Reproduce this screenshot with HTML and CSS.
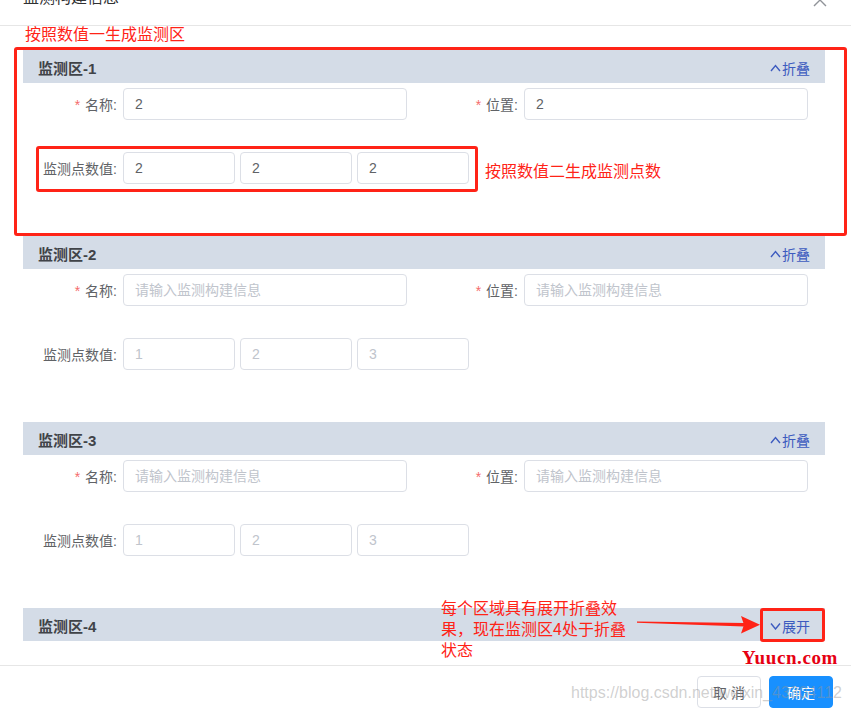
FILE: index.html
```html
<!DOCTYPE html>
<html lang="zh">
<head>
<meta charset="utf-8">
<title>监测构建信息</title>
<link rel="stylesheet" href="styles.css">
</head>
<body>
<div class="dialog">
  <div class="dlg-header">
    <span class="dlg-title">监测构建信息</span>
    <svg class="dlg-close" width="14" height="14" viewBox="0 0 14 14"><path d="M1 1L13 13M13 1L1 13" stroke="#909399" stroke-width="1.4" fill="none"/></svg>
  </div>

  <div class="dlg-body">
    <section class="zone">
      <div class="zone-head">
        <span class="zone-title">监测区-1</span>
        <span class="toggle"><svg class="chev" width="11" height="8" viewBox="0 0 11 8"><path d="M1 7L5.5 1.5L10 7" stroke="currentColor" stroke-width="1.4" fill="none"/></svg>折叠</span>
      </div>
      <div class="row">
        <div class="item"><label class="lbl req">名称:</label><input class="ipt" value="2"></div>
        <div class="item"><label class="lbl req">位置:</label><input class="ipt" value="2"></div>
      </div>
      <div class="row points">
        <div class="item"><label class="lbl">监测点数值:</label><input class="ipt sm" value="2"><input class="ipt sm" value="2"><input class="ipt sm" value="2"></div>
      </div>
    </section>

    <section class="zone">
      <div class="zone-head">
        <span class="zone-title">监测区-2</span>
        <span class="toggle"><svg class="chev" width="11" height="8" viewBox="0 0 11 8"><path d="M1 7L5.5 1.5L10 7" stroke="currentColor" stroke-width="1.4" fill="none"/></svg>折叠</span>
      </div>
      <div class="row">
        <div class="item"><label class="lbl req">名称:</label><input class="ipt" placeholder="请输入监测构建信息"></div>
        <div class="item"><label class="lbl req">位置:</label><input class="ipt" placeholder="请输入监测构建信息"></div>
      </div>
      <div class="row points">
        <div class="item"><label class="lbl">监测点数值:</label><input class="ipt sm" placeholder="1"><input class="ipt sm" placeholder="2"><input class="ipt sm" placeholder="3"></div>
      </div>
    </section>

    <section class="zone">
      <div class="zone-head">
        <span class="zone-title">监测区-3</span>
        <span class="toggle"><svg class="chev" width="11" height="8" viewBox="0 0 11 8"><path d="M1 7L5.5 1.5L10 7" stroke="currentColor" stroke-width="1.4" fill="none"/></svg>折叠</span>
      </div>
      <div class="row">
        <div class="item"><label class="lbl req">名称:</label><input class="ipt" placeholder="请输入监测构建信息"></div>
        <div class="item"><label class="lbl req">位置:</label><input class="ipt" placeholder="请输入监测构建信息"></div>
      </div>
      <div class="row points">
        <div class="item"><label class="lbl">监测点数值:</label><input class="ipt sm" placeholder="1"><input class="ipt sm" placeholder="2"><input class="ipt sm" placeholder="3"></div>
      </div>
    </section>

    <section class="zone collapsed">
      <div class="zone-head">
        <span class="zone-title">监测区-4</span>
        <span class="toggle"><svg class="chev" width="11" height="8" viewBox="0 0 11 8"><path d="M1 1.5L5.5 7L10 1.5" stroke="currentColor" stroke-width="1.4" fill="none"/></svg>展开</span>
      </div>
    </section>
  </div>

  <div class="dlg-footer">
    <button class="btn">取 消</button>
    <button class="btn primary">确定</button>
  </div>

  <div class="note note1">按照数值一生成监测区</div>
  <div class="mark mark1"></div>
  <div class="mark mark2"></div>
  <div class="note note2">按照数值二生成监测点数</div>
  <div class="note note3">每个区域具有展开折叠效<br>果，现在监测区4处于折叠<br>状态</div>
  <svg class="arrow" width="135" height="30" viewBox="0 0 135 30"><polygon points="7,11.5 114,13 114,16.5 7,12.7" fill="#ff2317"/><polygon points="111,6 130,14.8 111,23.5 114,14.8" fill="#ff2317"/></svg>
  <div class="mark mark3"></div>
  <div class="brand">Yuucn.com</div>
  <div class="watermark">https://blog.csdn.net/weixin_43304112</div>
</div>
</body>
</html>
```

FILE: styles.css
```css
* { box-sizing: border-box; }
html, body { margin: 0; padding: 0; background: #fff; }
body {
  font-family: "Liberation Sans", "Noto Sans CJK SC", sans-serif;
  font-size: 14px;
  color: #606266;
  overflow: hidden;
}
.dialog {
  position: relative;
  width: 851px;
  height: 713px;
  overflow: hidden;
}
.dlg-header {
  height: 26px;
  border-bottom: 1px solid #e6e6e6;
  display: flex;
  justify-content: space-between;
  padding: 0 23px;
}
.dlg-title {
  font-size: 16px;
  line-height: 16px;
  margin-top: -10px;
  color: #303133;
}
.dlg-close {
  margin-top: -7px;
  margin-right: 1px;
}
.dlg-body {
  padding: 24px 26px 24px 23px;
}
.zone { margin-bottom: 52px; }
.zone.collapsed { margin-bottom: 0; }
.zone-head {
  height: 33px;
  background: #d4dce7;
  display: flex;
  align-items: center;
  justify-content: space-between;
  padding: 0 15px;
}
.zone-title {
  font-size: 15px;
  font-weight: bold;
  color: #404348;
  padding-top: 1px;
}
.toggle {
  color: #3d5bbf;
  font-size: 14px;
  display: flex;
  align-items: center;
  padding-top: 2px;
}
.chev { margin-right: 1px; }
.row {
  display: grid;
  grid-template-columns: 1fr 1fr;
  margin-top: 5px;
}
.row.points { margin-top: 32px; display: flex; }
.item { display: flex; align-items: center; }
.lbl {
  width: 100px;
  padding-right: 6px;
  text-align: right;
  color: #606266;
  font-size: 14px;
}
.lbl.req::before {
  content: "*";
  color: #f56c6c;
  margin-right: 5px;
}
.ipt {
  width: 284px;
  height: 32px;
  border: 1px solid #dcdfe6;
  border-radius: 4px;
  padding: 0 11px;
  font-family: "Liberation Sans", "Noto Sans CJK SC", sans-serif;
  font-size: 14px;
  color: #606266;
  background: #fff;
  outline: none;
}
.ipt::placeholder { color: #c0c4cc; }
.ipt.sm { width: 112px; margin-right: 5px; }
.dlg-footer {
  border-top: 1px solid #e6e6e6;
  padding: 10px 18px 0 0;
  display: flex;
  justify-content: flex-end;
}
.btn {
  height: 32px;
  width: 64px;
  border: 1px solid #dcdfe6;
  border-radius: 4px;
  background: #fff;
  color: #606266;
  font-family: "Liberation Sans", "Noto Sans CJK SC", sans-serif;
  font-size: 14px;
  padding: 0;
}
.btn.primary {
  margin-left: 8px;
  background: #1890ff;
  border-color: #1890ff;
  color: #fff;
}
.note {
  position: absolute;
  color: #ff2317;
  font-size: 16px;
  font-family: "Noto Sans CJK SC", sans-serif;
  white-space: nowrap;
}
.note1 { left: 25px; top: 24px; line-height: 18px; }
.note2 { left: 485px; top: 161px; line-height: 18px; }
.note3 { left: 441px; top: 597px; line-height: 21px; }
.mark {
  position: absolute;
  border: 3px solid #ff2317;
  border-radius: 3px;
}
.mark1 { left: 14px; top: 47px; width: 833px; height: 189px; }
.mark2 { left: 36px; top: 146px; width: 442px; height: 46px; }
.mark3 { left: 760px; top: 608px; width: 65px; height: 34px; }
.arrow { position: absolute; left: 630px; top: 610px; }
.brand {
  position: absolute;
  left: 742px;
  top: 647px;
  font-family: "Liberation Serif", serif;
  font-weight: bold;
  font-size: 19px;
  line-height: 22px;
  letter-spacing: 0.6px;
  color: #e60012;
}
.watermark {
  position: absolute;
  left: 571px;
  top: 684px;
  font-family: "Liberation Sans", sans-serif;
  font-size: 16px;
  line-height: 18px;
  color: rgba(150, 150, 150, 0.45);
  white-space: nowrap;
}
```
